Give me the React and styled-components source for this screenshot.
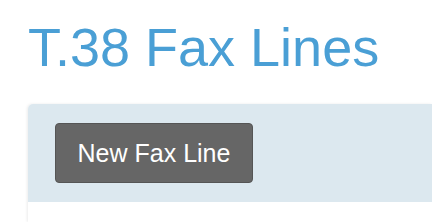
import React from "react";
import styled, { createGlobalStyle } from "styled-components";

const GlobalStyle = createGlobalStyle`
  body {
    margin: 0;
    background: #ffffff;
    font-family: "Liberation Sans", Arial, sans-serif;
    overflow: hidden;
  }
`;

const App = () => {
  return (
    <Page__main>
      <GlobalStyle />
      <Title__h1>T.38 Fax Lines</Title__h1>

      <Card__section>
        <Toolbar__div>
          <PrimaryButton__button type="button">New Fax Line</PrimaryButton__button>
        </Toolbar__div>
        <CardBody__div />
      </Card__section>
    </Page__main>
  );
};

export default App;

const Page__main = styled.main`
  padding-left: 28px;
  height: 222px;
  overflow: hidden;
`;

const Title__h1 = styled.h1`
  margin: 0;
  padding-top: 17px;
  padding-bottom: 27px;
  font-size: 54px;
  line-height: 60px;
  font-weight: 400;
  color: #4a9fd5;
  white-space: nowrap;
`;

const Card__section = styled.section`
  background: #ffffff;
  border-radius: 5px 0 0 0;
  box-shadow: -1px 0 3px rgba(0, 0, 0, 0.08);
  overflow: hidden;
`;

const Toolbar__div = styled.div`
  display: flex;
  align-items: center;
  padding: 19px 27px;
  background: #dce8ef;
`;

const PrimaryButton__button = styled.button`
  width: 198px;
  height: 60px;
  padding: 0;
  border: 1px solid #555555;
  border-radius: 4px;
  background: #666666;
  color: #ffffff;
  font-family: "Liberation Sans", Arial, sans-serif;
  font-size: 25px;
  cursor: pointer;
`;

const CardBody__div = styled.div`
  height: 20px;
`;
